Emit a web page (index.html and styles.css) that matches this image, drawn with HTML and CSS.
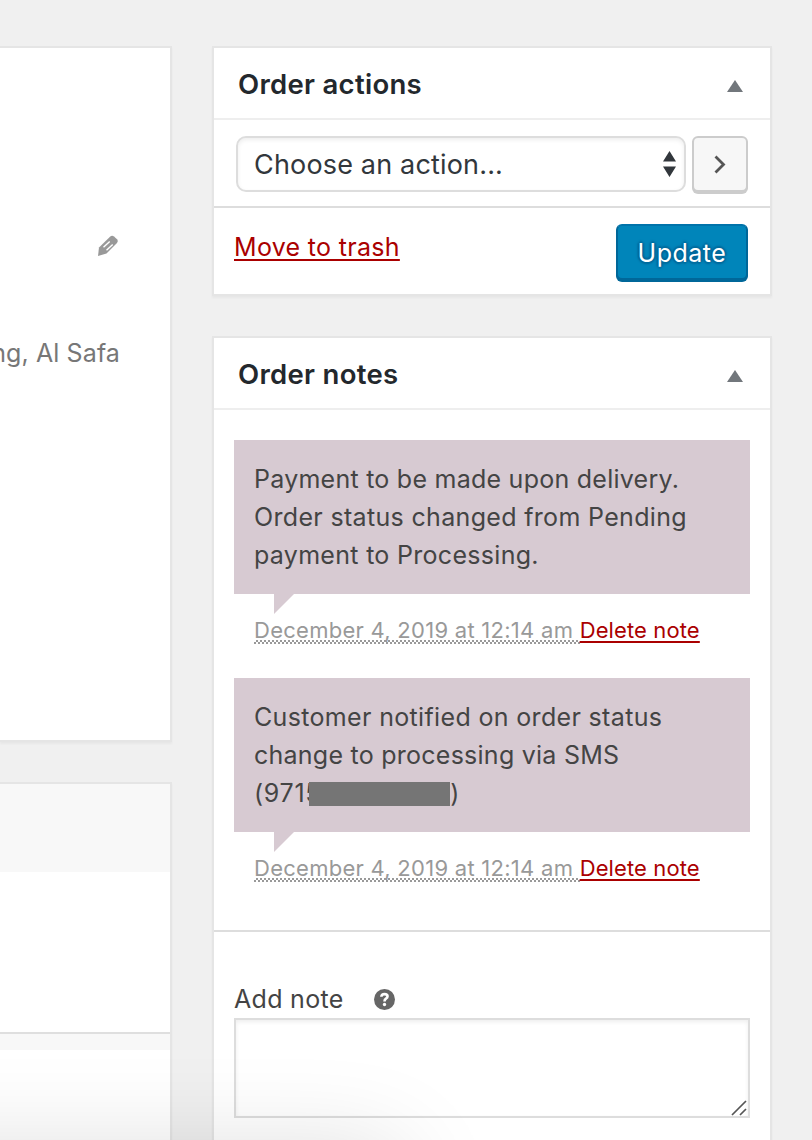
FILE: index.html
```html
<!DOCTYPE html>
<html lang="en">
<head>
<meta charset="utf-8">
<title>Edit order</title>
<link rel="stylesheet" href="styles.css">
</head>
<body>
<div class="page">
  <main class="main">
    <section class="box details">
      <svg class="pencil" width="22" height="22" viewBox="0 0 22 22"><path fill="#999" d="M1 21 2 12.500 13 1.800Q15 0 17 1.500L20 4.300Q21.800 6 20 8L9.500 18.500Z"/><path d="M6.500 12.300 12.700 6.500M9.500 15.300 15.700 9.500" stroke="#fff" stroke-width="1.400"/></svg>
      <p class="address"><span class="t-address">ng, Al Safa</span></p>
    </section>
    <section class="box items">
      <div class="items-head"></div>
      <div class="items-row"></div>
      <div class="items-gap"></div>
    </section>
  </main>
  <aside class="side">
    <section class="box">
      <header class="head"><h2 class="t-actions">Order actions</h2><svg class="toggle" width="16" height="12" viewBox="0 0 16 12"><path d="M8 0 16 12H0Z" fill="#72777c"/></svg></header>
      <div class="choose">
        <div class="select"><span class="t-choose">Choose an action...</span><svg width="13" height="26" viewBox="0 0 13 26"><path d="M6.500 0 13 10.500H0ZM0 15.500H13L6.500 26Z" fill="#32373c"/></svg></div>
        <button class="go"><svg width="12" height="20" viewBox="0 0 12 20"><path d="M1.500 2.500 9.500 10.500 1.500 18.500" fill="none" stroke="#555" stroke-width="2.800"/></svg></button>
      </div>
      <div class="submit"><a class="link t-trash">Move to trash</a><button class="update"><span class="t-update">Update</span></button></div>
    </section>
    <section class="box notes">
      <header class="head"><h2 class="t-notes">Order notes</h2><svg class="toggle" width="16" height="12" viewBox="0 0 16 12"><path d="M8 0 16 12H0Z" fill="#72777c"/></svg></header>
      <ul class="list">
        <li class="note">
          <div class="bubble"><span class="n1">Payment to be made upon delivery.</span><br><span class="n2">Order status changed from Pending</span><br><span class="n3">payment to Processing.</span></div>
          <p class="meta"><span class="date">December 4, 2019 at 12:14 am </span><a class="link del">Delete note</a></p>
        </li>
        <li class="note">
          <div class="bubble"><span class="n4">Customer notified on order status</span><br><span class="n5">change to processing via SMS</span><br><span class="phone"><span class="n6">(971</span><span class="clip">5</span><span class="redacted"></span><span>)</span></span></div>
          <p class="meta"><span class="date">December 4, 2019 at 12:14 am </span><a class="link del">Delete note</a></p>
        </li>
      </ul>
      <div class="add">
        <label class="label"><span class="t-add">Add note</span><svg width="21" height="21" viewBox="0 0 20 20"><circle cx="10" cy="10" r="10" fill="#666"/><path d="M7 7.400Q7.200 4.900 10 4.900Q12.900 4.900 12.900 7Q12.900 8.300 11.400 9.200Q10 10 10 11.800" fill="none" stroke="#fff" stroke-width="2.500"/><circle cx="10" cy="14.800" r="1.600" fill="#fff"/></svg></label>
        <div class="textarea"><svg width="16" height="16" viewBox="0 0 16 16"><path d="M1 15 15 1M9 15 15 9" stroke="#555" stroke-width="1.700"/></svg></div>
      </div>
    </section>
  </aside>
  <div class="shade"></div>
</div>
</body>
</html>
```
FILE: styles.css
```css
* { box-sizing: border-box; }
body { margin: 0; background: #f0f0f0; font-family: Inter, sans-serif; font-size: 25px; letter-spacing: .3px; color: #444; }
h2, p, ul { margin: 0; padding: 0; }
ul { list-style: none; }
svg { display: block; flex: none; }
span, a, h2 { white-space: pre; }
button { font: inherit; letter-spacing: inherit; padding: 0; }
.page { position: relative; width: 812px; height: 1140px; overflow: hidden; display: flex; gap: 40px; padding-top: 46px; }
.main { width: 172px; display: flex; flex-direction: column; gap: 40px; }
.side { width: 560px; display: flex; flex-direction: column; gap: 40px; }
.box { flex: none; background: #fff; border: 2px solid #e5e5e5; box-shadow: 0 2px 2px rgba(0,0,0,.04); }
.main .box { border-left: 0; }
.details { height: 696px; padding: 187px 51px 0 0; display: flex; flex-direction: column; align-items: flex-end; }
.address { color: #777; margin-top: 77px; line-height: 38px; letter-spacing: .1px; margin-right: -1px; }
.items { height: 420px; }
.items-head { height: 88px; background: #f8f8f8; }
.items-row { height: 162px; border-bottom: 2px solid #dfdfdf; }
.items-gap { height: 16px; background: #f8f8f8; }
.head { height: 72px; padding: 0 27px 0 24px; border-bottom: 2px solid #eee; display: flex; align-items: center; justify-content: space-between; }
.head h2 { font-size: 27.500px; font-weight: 600; color: #23282d; line-height: 38px; padding-top: 1px; }
.toggle { margin-top: 6px; }
.choose { height: 88px; padding: 16px 22px 0; display: flex; gap: 6px; border-bottom: 2px solid #ddd; }
.select { width: 450px; height: 56px; border: 2px solid #ddd; border-radius: 10px; box-shadow: inset 0 2px 4px rgba(0,0,0,.07); padding: 0 8px 0 16px; display: flex; align-items: center; justify-content: space-between; font-size: 27px; letter-spacing: .17px; color: #32373c; }
.go { width: 56px; height: 56px; border: 2px solid #ccc; border-radius: 6px; background: #f7f7f7; box-shadow: 0 2px 0 #ccc; display: flex; align-items: center; justify-content: center; }
.submit { height: 86px; padding: 16px 22px 0 20px; display: flex; justify-content: space-between; align-items: flex-start; }
.link { color: #a00; text-decoration: underline; text-decoration-thickness: 2px; text-decoration-skip-ink: none; text-underline-offset: 3px; }
.t-trash { line-height: 46px; letter-spacing: .31px; }
.update { width: 132px; height: 56px; border: 2px solid; border-color: #0073aa #006799 #006799; border-radius: 6px; background: #0085ba; box-shadow: 0 2px 0 #006799; color: #fff; letter-spacing: .5px; padding-top: 2px; text-shadow: 0 -2px 2px #006799, 2px 0 2px #006799, 0 2px 2px #006799, -2px 0 2px #006799; }
.notes { height: 900px; }
.list { padding: 30px 20px 0; height: 522px; border-bottom: 2px solid #ddd; }
.note { height: 238px; }
.bubble { position: relative; height: 154px; padding: 20px; background: #d7cad2; line-height: 38px; }
.bubble::after { content: ""; position: absolute; left: 40px; top: 154px; border-top: 20px solid #d7cad2; border-right: 20px solid transparent; }
.n1, .n5 { letter-spacing: .25px; }
.n2 { letter-spacing: .33px; }
.n4 { letter-spacing: .34px; }
.n6 { letter-spacing: .7px; }
.phone { display: flex; align-items: center; height: 38px; }
.clip { width: 4px; overflow: hidden; }
.redacted { width: 141px; height: 24px; background: #757575; margin-top: 2px; }
.meta { padding: 21px 0 0 20px; height: 60px; font-size: 22px; line-height: 30px; color: #999; }
.date { padding-bottom: 1px; letter-spacing: .27px; background: repeating-conic-gradient(#999 0 25%, transparent 0 50%) 0 100% / 4px 4px repeat-x; }
.del { letter-spacing: .12px; text-underline-offset: 3px; }
.add { padding: 48px 20px 0; }
.label { display: flex; align-items: center; gap: 30px; height: 38px; }
.textarea { height: 100px; border: 2px solid #ddd; box-shadow: inset 0 2px 4px rgba(0,0,0,.07); display: flex; justify-content: flex-end; align-items: flex-end; padding: 0 1px 0 0; }
.shade { position: absolute; left: -200px; top: 1150px; width: 600px; height: 300px; box-shadow: 0 0 100px rgba(0,0,0,.14); }
```
